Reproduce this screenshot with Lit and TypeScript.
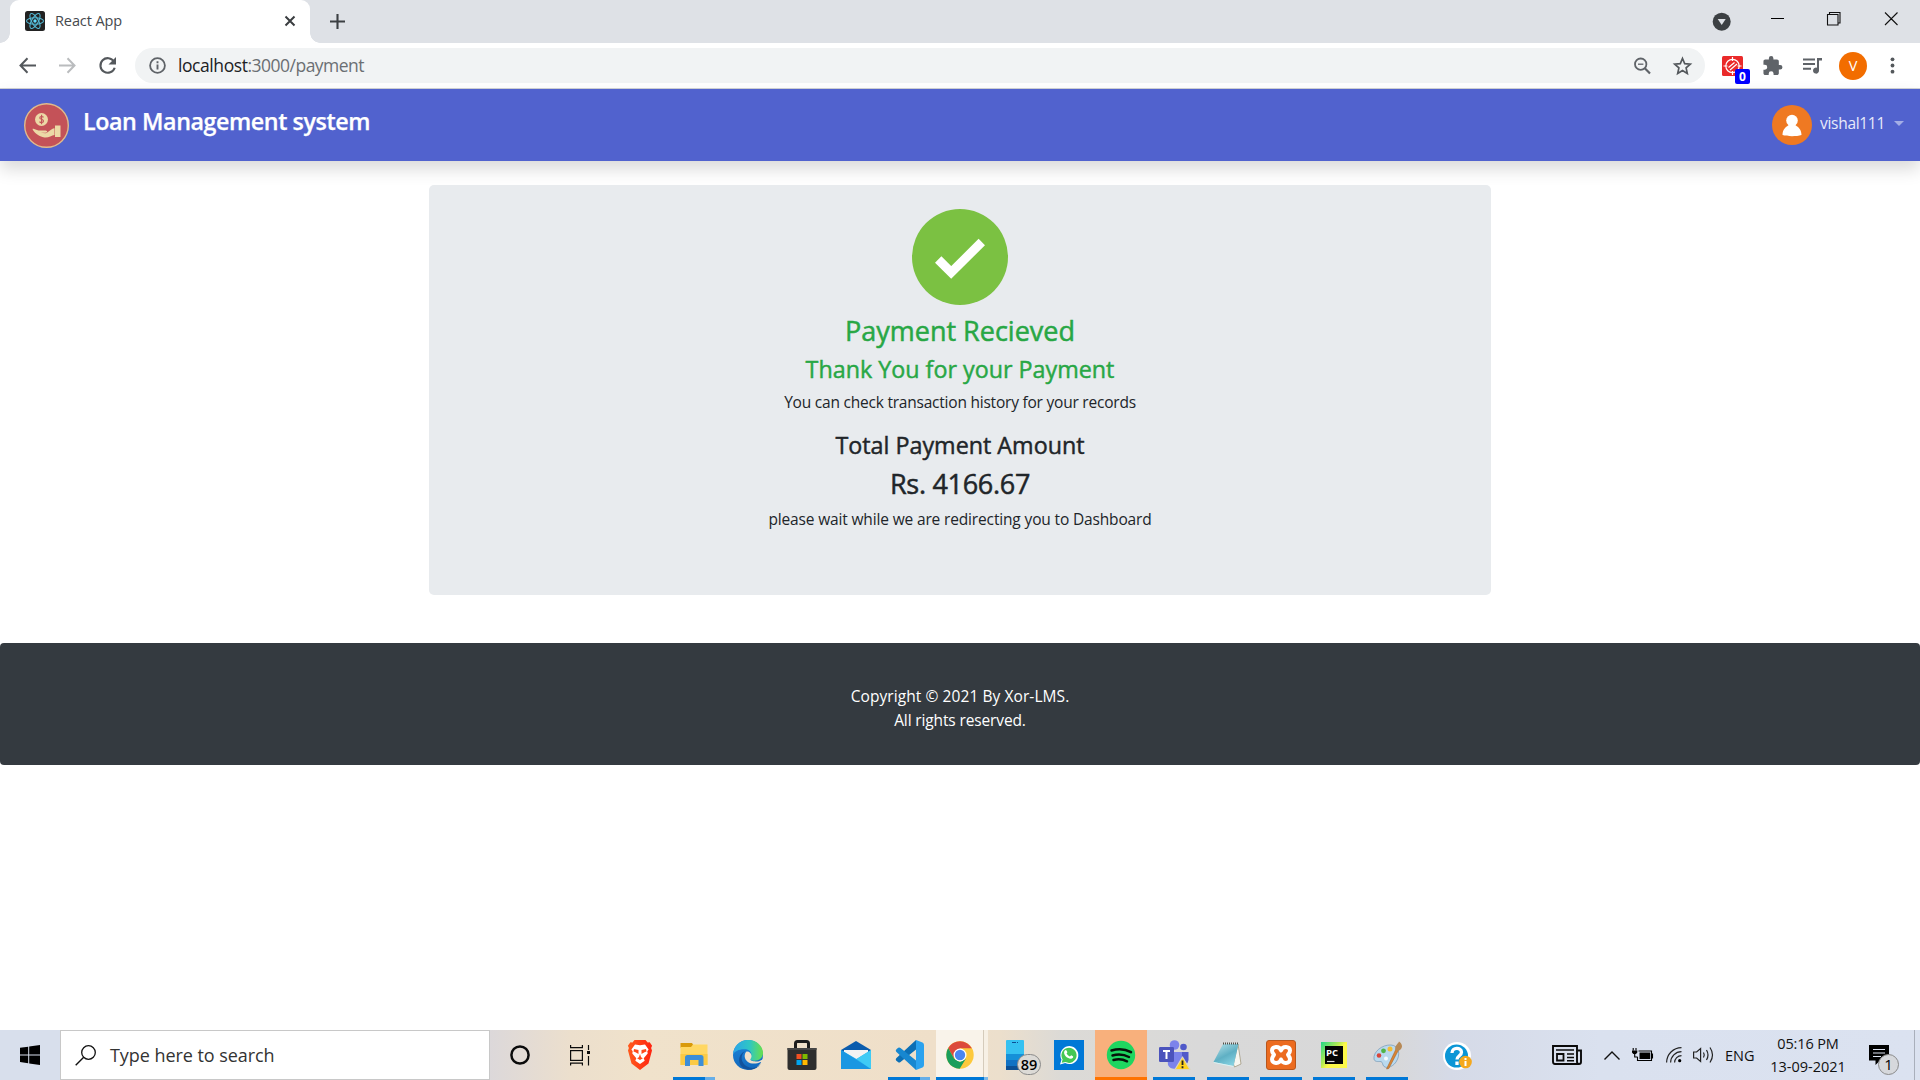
import { LitElement, html, css, svg } from "lit";
import { customElement } from "lit/decorators.js";

const taskIcons = {
  cortana: svg`<circle cx="15" cy="15" r="8.6" fill="none" stroke="#0b0b0b" stroke-width="2.5"/>`,
  taskview: svg`<g fill="none" stroke="#0b0b0b" stroke-width="1.200"><rect x="5.600" y="10.600" width="11.800" height="9.800"/><path d="M5.600 5v2.600h11.800V5M5.600 25.500v-2.300h11.800v2.300M23.500 5v5M23.500 16v9.500"/></g><rect x="22" y="11" width="3" height="3" fill="#0b0b0b"/>`,
  brave: svg`<defs><linearGradient id="bv" x2="1"><stop stop-color="#ff5a1c"/><stop offset="1" stop-color="#ff2410"/></linearGradient></defs><path d="M7.500 2.500 9.500 0h11l2.200 2.500 2-.2 2.400 3.500-1 2.200.9 2.400-3.500 13.200L15 30l-8.500-6.400L3 10.400 3.900 8l-1-2.200L5.400 2.300z" fill="url(#bv)"/><path d="m10 4.500 5 .8 5-.8 3.600 5-1.300 1.700.4 2.300-4 4.800 1 2.500L15 24l-4.700-3.200 1-2.500-4-4.800.4-2.300-1.300-1.700z" fill="#fff"/><path d="m9 9 4.500 1.100v4l-3-1.900-2-.6zM21 9l-4.500 1.100v4l3-1.900 2-.6zM15 14l1.100 3.300 1.800.9-2.900 1.700-2.900-1.700 1.800-.9z" fill="#ff4a1a"/>`,
  explorer: svg`<path d="M1.500 3h11.500l1.500 2.500L12 8H1.500z" fill="#d99a0b"/><path d="M1.500 7h10.500l2-2.500H28.500V25H1.500z" fill="#ffd763"/><path d="M1.500 14h27v11h-27z" fill="#fbca45"/><path d="M6 26V17.500q0-2.500 2.500-2.500h13.500q2.500 0 2.500 2.500V26h-5v-6h-8.500v6z" fill="#3c8ed8"/>`,
  edge: svg`<defs><linearGradient id="e1"><stop stop-color="#2ba4ea"/><stop offset=".55" stop-color="#2fc6c4"/><stop offset="1" stop-color="#69e04a"/></linearGradient><linearGradient id="e2" x2="0" y2="1"><stop stop-color="#1b86dc"/><stop offset="1" stop-color="#1268bc"/></linearGradient></defs><circle cx="15" cy="15" r="15" fill="url(#e2)"/><path d="M0 14C1 5.500 7.500 0 15 0c9 0 15 6.300 15 12.800 0 5.200-4 8-8.200 8-4 0-5.300-1.600-4.300-3.100 2-2.600.8-7.700-4.500-8.400C7 8.500 2 11 0 14z" fill="url(#e1)"/><path d="M12 11.300c-5 3.700-4.500 11.700 2 15.200 5 2.700 11 1.500 14-3.500C24.500 30 15 32 9 27 4 22 6 13.500 12 11.300z" fill="#11529c"/><path d="M13.500 11.500c-2.700 2.700-2.300 7.300.8 9.900 3.500 3 9.200 2.600 13.200.6l3 2V19l-4.500 2.300c-2 .6-8.300.2-8.600-1.700-.1-1 1.400-1.600 1.100-4.100-.3-2.200-2.500-4.500-5-4z" fill="#efe1cb"/>`,
  store: svg`<path d="M8.500 9V3.500q0-2 2-2h9q2 0 2 2V9" fill="none" stroke="#1d1d1d" stroke-width="3"/><path d="M.5 8h29v20q0 2-2 2h-25q-2 0-2-2z" fill="#2e2e2e"/><path d="M.5 8h29v2H.5z" fill="#454545"/><path d="M9.500 14h5v5h-5z" fill="#f25022"/><path d="M15.500 14h5v5h-5z" fill="#7fba00"/><path d="M9.500 20h5v5h-5z" fill="#00a4ef"/><path d="M15.500 20h5v5h-5z" fill="#ffb900"/>`,
  mail: svg`<path d="M0 10 15 1l15 9v4H0z" fill="#0b5cad"/><path d="M3 10h24v8L15 23 3 18z" fill="#f3f3f3"/><path d="M0 10v19h30V10L15.500 19z" fill="#28b3ee"/><path d="m0 10 30 19H0z" fill="#1a97e2"/><path d="M30 10v19L15.500 19z" fill="#3fcbf5"/>`,
  vscode: svg`<path d="M22 0 3 17.500q-2.500 2 0 3.800l1.200.9q1.200.8 2.300-.2L22 9.500z" fill="#0c6fb5"/><path d="M22 30 3 12.500q-2.500-2 0-3.800l1.200-.9q1.200-.8 2.300.2L22 20.500z" fill="#1787d0"/><path d="M22 0 28.500 2.500q1.500.8 1.500 2.500v20q0 1.700-1.500 2.500L22 30z" fill="#2ba2ee"/>`,
  chrome: svg`<circle cx="15" cy="15" r="13.700" fill="#fdc93c"/><path d="M3.200 8A13.700 13.700 0 0 1 26.900 8.200H15L9 18.500z" fill="#dc4a3c"/><path d="M3.200 8A13.700 13.700 0 0 0 14.700 28.700L21 18.500 15 22l-6-3.500z" fill="#1a9e5c"/><circle cx="15" cy="15" r="6.500" fill="#fff"/><circle cx="15" cy="15" r="5.200" fill="#4a86f0"/>`,
  phone: svg`<rect x="6" width="18" height="30" rx="1" fill="#35c1f1"/><path d="M6 14h18v7H6z" fill="#1590d8"/><path d="M6 20h18v6H6z" fill="#1172c4"/><path d="M6 26h18v4H6z" fill="#0c4f94"/><path d="M12 2.500h4M17 2.500h1" stroke="#0c4f94"/>`,
  whatsapp: svg`<path d="M0 0h30v30H0z" fill="#0078d7"/><path d="m6 24.500 1.500-5a9 9 0 1 1 3.700 3.600z" fill="#fff"/><path d="m7.700 22.800.9-3.400a7.600 7.600 0 1 1 3 2.700z" fill="#45c755"/><path d="M10.800 10.500c1-1 1.700-.6 2.600 1.800l-.8 1.300c.8 1.500 1.900 2.400 3.300 3l1.300-1.300c2.300 1 2.300 1.200 1.700 2.400-1 1.600-3 1.400-5.200.1-2.600-1.500-4.800-4.800-2.900-7.300z" fill="#fff"/>`,
  spotify: svg`<circle cx="15" cy="15" r="14.200" fill="#1fd660"/><path d="M5.500 10.500c7-2 14-1.300 19.500 1.700M6.500 15.500c6-1.600 11.500-1 16.500 1.500M7.500 20c5-1.300 9.500-.8 13.500 1.300" fill="none" stroke="#06130a" stroke-width="2.500" stroke-linecap="round"/>`,
  teams: svg`<circle cx="15.500" cy="5" r="4.800" fill="#7b83eb"/><circle cx="24.500" cy="7" r="3.300" fill="#5059c9"/><path d="M20 12h9.500v8a6 6 0 0 1-8 5z" fill="#5059c9"/><path d="M8 12h15v9a7.500 7.500 0 0 1-14 4z" fill="#7b83eb"/><rect y="7" width="15" height="15" rx="1.200" fill="#4b53bc"/><path d="M4 11h7M7.500 11v8" stroke="#fff" stroke-width="2"/><path d="M23.500 17 31 29.500H16z" fill="#ffd21f" stroke="#ddd6bd" stroke-width="1.200" stroke-linejoin="round"/><path d="M23.500 20.500v4.500M23.500 26.300v2" stroke="#222" stroke-width="1.800"/>`,
  notepad: svg`<defs><linearGradient id="np" x2=".6" y2="1"><stop stop-color="#b9e3ea"/><stop offset=".6" stop-color="#5fb0c4"/><stop offset="1" stop-color="#83cfe0"/></linearGradient></defs><path d="m25 4 3 20-6.500 3-1-3z" fill="#f6f6f0" stroke="#8c8060" stroke-width=".6"/><path d="M10 4h15.500L20.500 26 .5 22z" fill="url(#np)"/><path d="M.5 22 20.500 26v1L1 23z" fill="#d8f3f5"/><path d="M10 3.500h15" stroke="#50504a" stroke-width="2" stroke-dasharray="1 1"/>`,
  xampp: svg`<rect x=".5" y=".5" width="29" height="29" rx="2.500" fill="#ec6b1f" stroke="#b8561c"/><path d="M15 10.500C13.500 5.500 6 6 6 10.500c0 2 1 3 2 4.300-1 1.300-2 2.500-2 4.500 0 4.500 7.500 5 9 .2 1.500 4.800 9 4.300 9-.2 0-2-1-3.200-2-4.500 1-1.300 2-2.300 2-4.300 0-4.500-7.500-5-9 0z" fill="none" stroke="#fff" stroke-width="4" stroke-linejoin="round"/>`,
  pycharm: svg`<defs><linearGradient id="pc" x2="1" y2=".8"><stop stop-color="#21d789"/><stop offset=".45" stop-color="#b9ec52"/><stop offset=".6" stop-color="#fcf84a"/></linearGradient></defs><path d="M2 2h26v26H2z" fill="url(#pc)"/><path d="M6 6h18v18H6z" fill="#050505"/><path d="M8 21.500h7.500" stroke="#ddd" stroke-width="1.200"/><text class="pc" x="7" y="15.500">PC</text>`,
  paint: svg`<path d="M19 5C10 4.500 1 12 2 19c.6 3 4 2.500 6 2.500s2.300 1 3 3.500c1.500 4 9 3 13-3 5-7.500 3-16.500-5-17z" fill="#b9d9ee" stroke="#7397b5" stroke-width=".7"/><circle cx="7" cy="15.500" r="2.300" fill="#d9453a"/><circle cx="11.500" cy="10.800" r="2.400" fill="#51b548"/><circle cx="18" cy="9" r="2.500" fill="#f3bd35"/><circle cx="14" cy="18.500" r="2" fill="#f6fbff"/><path d="m24 9 2.300 1.500-9.500 18-2.300.5z" fill="#d98434" stroke="#9a5c23" stroke-width=".5"/><path d="M23.500 10C22 6 26 4 27 1.500c2 1.500 2.500 2 3 4.500 0 3-2.500 4.500-4 5z" fill="#b78955"/>`,
  help: svg`<circle cx="15" cy="16" r="14" fill="#fff"/><circle cx="14.500" cy="16" r="11.500" fill="#0b96d6"/><path d="M10 13c0-6 9.500-6 9.500-.8 0 3.500-4.500 3.500-4.500 7.300M15 21.500v3.500" fill="none" stroke="#fff" stroke-width="3.300"/><circle cx="23.500" cy="22" r="6.300" fill="#f5a81c"/><path d="M23.500 18v2M23.500 21v5" stroke="#fff" stroke-width="2"/>`,
};

interface Task { icon: keyof typeof taskIcons; w: number; bar?: string; badge?: string }

const tasks: Task[] = [
  { icon: "cortana", w: 60 },
  { icon: "taskview", w: 60 },
  { icon: "brave", w: 60 },
  { icon: "explorer", w: 48, bar: "multi" },
  { icon: "edge", w: 60 },
  { icon: "store", w: 47 },
  { icon: "mail", w: 62 },
  { icon: "vscode", w: 44, bar: "multi" },
  { icon: "chrome", w: 52, bar: "current" },
  { icon: "phone", w: 54, badge: "89" },
  { icon: "whatsapp", w: 53 },
  { icon: "spotify", w: 52, bar: "alert" },
  { icon: "teams", w: 54, bar: "single" },
  { icon: "notepad", w: 53, bar: "single" },
  { icon: "xampp", w: 53, bar: "single" },
  { icon: "pycharm", w: 53, bar: "single" },
  { icon: "paint", w: 53, bar: "single" },
  { icon: "help", w: 88 },
];

@customElement("browser-chrome")
class BrowserChrome extends LitElement {
  static styles = css`
    :host { display: block; font-family: "Open Sans", "Noto Sans", sans-serif; }
    svg { display: block; flex: none; overflow: visible; }
    .strip { display: flex; height: 43px; background: #dee1e6; padding-left: 10px; box-sizing: border-box; }
    .tab { position: relative; display: flex; align-items: center; width: 300px; box-sizing: border-box; padding: 0 13px 1px 15px; background: #fff; border-radius: 9px 9px 0 0; }
    .tab::before, .tab::after { content: ""; position: absolute; bottom: 0; width: 10px; height: 10px; }
    .tab::before { left: -10px; background: radial-gradient(circle at 0 0, transparent 9.5px, #fff 10px); }
    .tab::after { right: -10px; background: radial-gradient(circle at 100% 0, transparent 9.5px, #fff 10px); }
    .name { flex: 1; margin-left: 10px; font-size: 14.5px; letter-spacing: -.1px; color: #45494d; line-height: 20px; padding-bottom: 1px; }
    .plus { margin: 14px 0 0 20px; }
    .win { margin-left: auto; display: flex; padding-right: 22px; }
    .bar { display: flex; align-items: center; height: 45px; background: #fff; padding-left: 19px; box-sizing: border-box; }
    .fwd { margin-left: 22px; }
    .rel { margin-left: 22px; }
    .omni { display: flex; align-items: center; width: 1570px; height: 35px; margin-left: 18px; border-radius: 18px; background: #f1f3f4; box-sizing: border-box; padding: 0 14px; }
    .url { flex: 1; margin-left: 12px; font-size: 17.5px; letter-spacing: -.52px; line-height: 24px; color: #6b6f73; padding-bottom: 1px; }
    .url b { font-weight: 400; color: #202124; letter-spacing: -.42px; }
    .star { margin-left: 22px; }
    .ext { position: relative; margin-left: 17px; }
    .count { position: absolute; left: 13px; top: 13px; width: 15px; height: 15px; border-radius: 2px; background: #00f; color: #fff; font: 700 12px/15px "Open Sans", sans-serif; text-align: center; }
    .puz { margin-left: 20px; }
    .queue { margin-left: 21px; }
    .me { width: 28px; height: 28px; margin-left: 17px; border-radius: 50%; background: #f26d00; color: #fff; font-size: 14.5px; line-height: 28px; text-align: center; }
    .dots { margin-left: 23px; }
    .rule { height: 1px; background: #d0d2d6; }
  `;
  render() {
    return html`
      <div class="strip">
        <div class="tab">
          <svg width="20" height="20"><rect width="20" height="20" rx="2.5" fill="#222"/><g fill="none" stroke="#53b8d4" stroke-width="1.1"><ellipse cx="10" cy="10" rx="8.5" ry="3.3"/><ellipse cx="10" cy="10" rx="8.5" ry="3.3" transform="rotate(60 10 10)"/><ellipse cx="10" cy="10" rx="8.5" ry="3.3" transform="rotate(120 10 10)"/></g><circle cx="10" cy="10" r="1.7" fill="#61dafb"/></svg>
          <span class="name">React App</span>
          <svg width="14" height="14" viewBox="0 0 14 14"><path d="m2.500 2.500 9 9M11.500 2.500l-9 9" stroke="#3a3d40" stroke-width="2"/></svg>
        </div>
        <svg class="plus" width="15" height="15"><path d="M7.500 0v15M0 7.500h15" stroke="#3c4043" stroke-width="2.1"/></svg>
        <div class="win">
          <svg width="185" height="43"><circle cx="8.700" cy="21.700" r="9" fill="#3c4043"/><path d="M4.700 19h8l-4 6z" fill="#dee1e6"/><path d="M58 18.500h13" stroke="#000"/><path d="M114.500 14.500h10.500v10.500h-10.500zM116.500 14v-1.500h10.500v10.500h-1.500M172 12.500l12.500 12.500M184.500 12.500 172 25" fill="none" stroke="#111" stroke-width="1.100"/></svg>
        </div>
      </div>
      <div class="bar">
        <svg width="18" height="16"><path d="M17 7.500H2M8.500.3 1.500 7.500l7 7.200" fill="none" stroke="#54585c" stroke-width="2"/></svg>
        <svg class="fwd" width="18" height="16"><path d="M0 7.500h15M8.500.3l7 7.200-7 7.200" fill="none" stroke="#babcbe" stroke-width="2"/></svg>
        <svg class="rel" width="18" height="18"><path d="M15 4.700A7.300 7.300 0 1 0 15.700 10.700" fill="none" stroke="#54585c" stroke-width="2.100"/><path d="M17 0v7.500H9.500z" fill="#54585c"/></svg>
        <div class="omni">
          <svg width="17" height="17"><circle cx="8.500" cy="8.500" r="7.400" fill="none" stroke="#5f6368" stroke-width="1.800"/><path d="M8.500 7.500v5M8.500 4.200v2" stroke="#5f6368" stroke-width="1.900"/></svg>
          <span class="url"><b>localhost</b>:3000/payment</span>
          <svg width="18" height="18"><circle cx="7.700" cy="7.200" r="5.700" fill="none" stroke="#5f6368" stroke-width="1.800"/><path d="M5 7.200h5.400" stroke="#5f6368" stroke-width="1.300"/><path d="m11.800 11.300 5.200 5.200" stroke="#5f6368" stroke-width="2.200"/></svg>
          <svg class="star" width="18" height="18"><path d="m9.500 1.500 2.200 5.200 5.600.5-4.200 3.700 1.200 5.500-4.800-2.900-4.800 2.900 1.200-5.500L1.700 7.200l5.600-.5z" fill="none" stroke="#54585c" stroke-width="1.700"/></svg>
        </div>
        <div class="ext">
          <svg width="21" height="20"><rect width="21" height="20" rx="1.500" fill="#ea2a2a"/><g fill="none" stroke="#fff" stroke-width="1.200"><circle cx="10.500" cy="10" r="6.700"/><path d="M10.500 1v4M10.500 15v4M1.500 10h4M15.500 10h4M6.500 11.500l6-5M8 14l7-6"/></g></svg>
          <span class="count">0</span>
        </div>
        <svg class="puz" width="19" height="19" viewBox="1.500 1 21 21"><path d="M20.500 11H19V7c0-1.100-.9-2-2-2h-4V3.500a2.500 2.500 0 0 0-5 0V5H4c-1.100 0-2 .9-2 2v3.800h1.500a2.700 2.700 0 0 1 0 5.400H2V20c0 1.100.9 2 2 2h3.800v-1.500a2.700 2.700 0 0 1 5.400 0V22H17c1.100 0 2-.9 2-2v-4h1.500a2.500 2.500 0 0 0 0-5z" fill="#5f6368"/></svg>
        <svg class="queue" width="19" height="16"><path d="M0 1.500h12M0 6h12M0 10.800h8" stroke="#5f6368" stroke-width="2"/><path d="M14 0h5v2.500h-3v10a3 3 0 1 1-2-2.700z" fill="#5f6368"/></svg>
        <span class="me">V</span>
        <svg class="dots" width="5" height="17" fill="#54585c"><circle cx="2.500" cy="2.300" r="1.900"/><circle cx="2.500" cy="8.500" r="1.900"/><circle cx="2.500" cy="14.700" r="1.900"/></svg>
      </div>
      <div class="rule"></div>
    `;
  }
}

@customElement("loan-page")
class LoanPage extends LitElement {
  static styles = css`
    :host { display: flex; flex-direction: column; font-family: "Open Sans", "Noto Sans", sans-serif; color: #212529; }
    svg { display: block; flex: none; }
    .nav { display: flex; height: 72px; box-sizing: border-box; background: #5162ce; padding: 14px 16px 0 24px; box-shadow: 0 8px 16px rgba(0, 0, 0, .15); }
    .title { margin: 2px 0 0 14px; font-size: 23.3px; font-weight: 600; line-height: 32px; color: #fff; letter-spacing: -.44px; -webkit-text-stroke: .25px #fff; white-space: nowrap; }
    .user { margin: 2px 0 0 auto; display: flex; height: 40px; color: #e8eafa; font-size: 15.5px; }
    .who { margin: 7px 9px 0 8px; line-height: 22px; letter-spacing: -.3px; }
    .caret { margin-top: 15px; }
    .card { display: flex; flex-direction: column; align-items: center; width: 1062px; height: 410px; margin: 24px auto 0; padding-top: 24px; box-sizing: border-box; border-radius: 5px; background: #e8ebee; white-space: nowrap; }
    .h1 { height: 34px; line-height: 34px; font-size: 27px; -webkit-text-stroke: .5px currentColor; }
    .h2 { height: 28px; line-height: 28px; font-size: 23.3px; -webkit-text-stroke: .45px currentColor; }
    .p { height: 24px; line-height: 24px; font-size: 15.5px; }
    .green { color: #28a745; }
    .received { margin-top: 9px; }
    .thanks { margin-top: 7px; }
    .check { margin-top: 7px; letter-spacing: -.22px; }
    .total { margin-top: 17px; }
    .amount { margin-top: 8px; letter-spacing: -.3px; }
    .wait { margin-top: 6px; letter-spacing: -.15px; }
    .foot { display: flex; flex-direction: column; align-items: center; height: 122px; margin-top: 48px; padding-top: 41px; box-sizing: border-box; background: #343a40; border-radius: 4px; color: #fff; font-size: 15.5px; line-height: 24px; }
    .l1 { letter-spacing: .08px; }
    .l2 { letter-spacing: -.13px; }
  `;
  render() {
    return html`
      <div class="nav">
        <svg width="45" height="45"><circle cx="22.500" cy="22.500" r="21.800" fill="#c45258" stroke="#e0ba8c" stroke-width="1.400"/><circle cx="17.500" cy="16.500" r="6.500" fill="#ecd9a6"/><path d="M19.500 14.400c-.8-1.300-3.700-1.200-3.700.5s3.700 1.200 3.700 3.100-3 2.100-4 .6M17.600 11.800v9.400" fill="none" stroke="#c45258" stroke-width="1.100"/><path d="M8.500 26c1-.8 3.500.8 6 1.500h7c2.500.3 2 2.200 0 2.200h-5l5 .6c3-.6 5-4.400 9-5V32c-3 .5-6 3-10 2.500C15 34 9 28.500 8.500 26z" fill="#ecd9a6"/><path d="M31 22.500h5.500v11.500H31z" fill="#ecd9a6"/></svg>
        <span class="title">Loan Management system</span>
        <div class="user">
          <svg width="40" height="40"><circle cx="20" cy="20" r="20" fill="#ef7922"/><circle cx="20" cy="15.500" r="5.800" fill="#fff"/><path d="M10.500 30c0-6 4-8.500 7-10.500h5c3 2 7 4.500 7 10.500-5 1.600-14 1.600-19 0z" fill="#fff"/></svg>
          <span class="who">vishal111</span>
          <svg class="caret" width="10" height="10"><path d="M0 1h10L5 6z" fill="#a4aee6"/></svg>
        </div>
      </div>
      <div class="card">
        <svg width="96" height="96"><circle cx="48" cy="48" r="48" fill="#7bc142"/><path d="m26.200 50.500 13 13L69.800 33" fill="none" stroke="#fff" stroke-width="9"/></svg>
        <div class="h1 green received">Payment Recieved</div>
        <div class="h2 green thanks">Thank You for your Payment</div>
        <div class="p check">You can check transaction history for your records</div>
        <div class="h2 total">Total Payment Amount</div>
        <div class="h1 amount">Rs. 4166.67</div>
        <div class="p wait">please wait while we are redirecting you to Dashboard</div>
      </div>
      <div class="foot"><span class="l1">Copyright © 2021 By Xor-LMS.</span><span class="l2">All rights reserved.</span></div>
    `;
  }
}

@customElement("task-bar")
class TaskBar extends LitElement {
  static styles = css`
    :host { display: flex; height: 50px; font-family: "Open Sans", "Noto Sans", sans-serif; color: #111; background: linear-gradient(90deg, #d8dfec 0, #d8dfec 60px, #dcd8da 490px, #ecdfcd 570px, #f0e2cb 640px, #efdfc9 940px, #ecdfcc 1000px, #dcdad6 1060px, #d9d9d9 1200px, #d8d8d9 1395px, #d5dae7 1450px, #dae1ef 1600px, #dbe2f0 1920px); }
    svg { display: block; flex: none; overflow: visible; }
    .start { display: flex; width: 60px; justify-content: center; align-items: center; }
    .search { display: flex; align-items: center; width: 430px; box-sizing: border-box; border: 1px solid #c8c8c8; background: #fff; padding-left: 14px; font-size: 18px; color: #333; }
    .hint { margin-left: 14px; letter-spacing: -.06px; }
    .task { position: relative; display: flex; justify-content: center; align-items: center; box-sizing: border-box; }
    .pc { font: 700 9.5px "Open Sans", sans-serif; fill: #fff; }
    .multi::after, .single::after, .current::after, .alert::after { content: ""; position: absolute; left: 50%; bottom: 0; width: 42px; height: 3px; margin-left: -21px; background: #0078d7; }
    .multi::after { background: linear-gradient(90deg, #0078d7 32px, #66aee8 32px); }
    .current { margin-left: 5px; padding-right: 4px; background: linear-gradient(90deg, #f9f3ea 47px, #d5cbbb 47px, #d5cbbb 48px, #f7f0e5 48px); }
    .current::after { width: 52px; margin-left: -26px; background: linear-gradient(90deg, #0078d7 48px, #7cb8e8 48px); }
    .alert { background: #f8b07c; }
    .alert::after { width: 52px; margin-left: -26px; background: #ff7300; }
    .badge { position: absolute; left: 29px; top: 24px; width: 24px; height: 21px; border: 1px solid #8a8a8a; border-radius: 11px; background: #dcdad6; box-sizing: border-box; font-size: 14.5px; font-weight: 600; line-height: 19px; text-align: center; color: #000; }
    .tray { margin-left: auto; display: flex; align-items: center; }
    .chev { margin-left: 22px; }
    .bat { margin-left: 12px; }
    .wifi { margin-left: 13px; }
    .vol { margin-left: 11px; }
    .lang { width: 29px; margin-left: 11px; margin-right: 1px; font-size: 14.5px; white-space: nowrap; }
    .clock { display: flex; flex-direction: column; align-items: center; width: 76px; margin-left: 15px; font-size: 14.5px; line-height: 23px; white-space: nowrap; }
    .time { letter-spacing: -.12px; }
    .note { position: relative; margin-left: 23px; }
    .n { position: absolute; left: 9px; top: 9px; width: 21px; height: 21px; box-sizing: border-box; border: 1px solid #8a8a8a; border-radius: 50%; background: #d6d8dc; font-size: 15px; line-height: 19px; text-align: center; color: #000; }
    .peek { width: 5px; height: 50px; margin-left: 25px; border-left: 1px solid #a9afbb; }
  `;
  render() {
    return html`
      <div class="start"><svg width="20" height="20"><path d="m0 2.800 8.200-1.100v7.700H0zM9.200 1.500 20 0v9.400H9.200zM0 10.400h8.200v7.800L0 17.100zM9.200 10.400H20V20L9.200 18.400z" fill="#000"/></svg></div>
      <div class="search">
        <svg width="21" height="21"><circle cx="13.500" cy="7.500" r="6.800" fill="none" stroke="#111" stroke-width="1.300"/><path d="m8.700 12.300-8 8" stroke="#111" stroke-width="1.400"/></svg>
        <span class="hint">Type here to search</span>
      </div>
      ${tasks.map((t) => html`<div class="task ${t.bar ?? ""}" style="width:${t.w}px"><svg width="30" height="30">${taskIcons[t.icon]}</svg>${t.badge ? html`<span class="badge">${t.badge}</span>` : ""}</div>`)}
      <div class="tray">
        <svg width="30" height="20" fill="none" stroke="#0a0a0a"><path d="M1 1h24v15.500q0 2.500 2 2.500H3q-2 0-2-2.500zM26 5.500h3V17q0 2-2 2" stroke-width="1.900"/><path d="M4 5h18M15 9h7M15 12.500h7M15 15.700h7" stroke-width="1.400"/><path d="M5 9h6.500v6.500H5z" stroke-width="1.800"/></svg>
        <svg class="chev" width="16" height="9"><path d="m.5 8.500 7.500-7.500 7.500 7.500" fill="none" stroke="#111" stroke-width="1.400"/></svg>
        <svg class="bat" width="21" height="14"><path d="M6.500 3h13v9.500H5.500V9M19.500 6h1v4h-1M1.200 0v2.500M4 0v2.500M2.700 6v3h3" fill="none" stroke="#000" stroke-width="1.100"/><path d="M7.500 4.500h10.700v6.500H7.500zM0 2.500h5.300v2L4 6H1.300L0 4.500z" fill="#000"/></svg>
        <svg class="wifi" width="16" height="16" fill="none" stroke="#222" stroke-width="1.200"><path d="M.6 15.500A15 15 0 0 1 15.500.6M4.600 15.500A11 11 0 0 1 15.500 4.600M8.600 15.500A7 7 0 0 1 15.500 8.600"/><circle cx="13.700" cy="13.700" r="1.600" fill="#000" stroke="none"/></svg>
        <svg class="vol" width="21" height="18" fill="none" stroke="#222" stroke-width="1.200"><path d="M.6 6h3l4-3.500v13L3.600 12h-3zM10.500 6.500q1.500 2.500 0 5M13.500 4q3 5 0 10M17 1.500q5 7.500 0 15"/></svg>
        <span class="lang">ENG</span>
        <div class="clock"><span class="time">05:16 PM</span><span class="date">13-09-2021</span></div>
        <div class="note"><svg width="20" height="20"><path d="M0 0h20v15.500H11L6.500 20v-4.500H0z" fill="#000"/><path d="M4 4.500h12M4 8h12M4 11.500h8" stroke="#dbe2f0" stroke-width="1.200"/></svg><span class="n">1</span></div>
        <div class="peek"></div>
      </div>
    `;
  }
}

@customElement("app-root")
class AppRoot extends LitElement {
  static styles = css`
    :host { display: flex; flex-direction: column; width: 1920px; height: 1080px; overflow: hidden; background: #fff; }
    .grow { flex: 1; }
  `;
  render() {
    return html`<browser-chrome></browser-chrome><loan-page></loan-page><div class="grow"></div><task-bar></task-bar>`;
  }
}
